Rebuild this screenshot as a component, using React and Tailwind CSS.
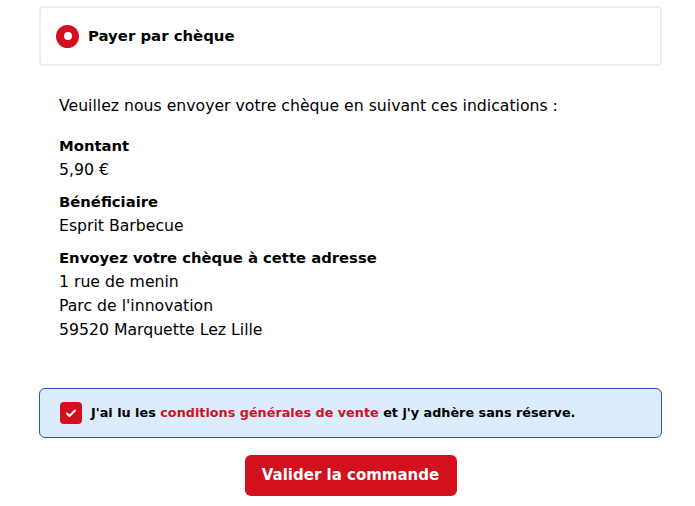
import React from 'react'

const font = { fontFamily: '"DejaVu Sans", "Noto Sans", sans-serif' }

export default function App() {
  return (
    <div className="w-[695px] h-[506px] bg-white text-black pt-[6px] pl-[39px]" style={font}>
      <div className="w-[623px]">
        {/* mode de paiement */}
        <div className="h-[60px] border-2 border-[#ececec] rounded-[4px] flex items-center pl-[15px]">
          <span className="w-[23px] h-[23px] rounded-full bg-[#d2101e] flex items-center justify-center">
            <span className="w-[8px] h-[8px] rounded-full bg-white" />
          </span>
          <span className="ml-[9px] text-[14.9px] font-bold">Payer par chèque</span>
        </div>

        {/* instructions */}
        <div className="pl-[20px] pt-[28px] text-[15.7px] leading-[24px]">
          <p>Veuillez nous envoyer votre chèque en suivant ces indications :</p>
          <p className="mt-[16px] font-bold text-[14.8px]">Montant</p>
          <p>5,90 €</p>
          <p className="mt-[8px] font-bold text-[14.8px]">Bénéficiaire</p>
          <p>Esprit Barbecue</p>
          <p className="mt-[8px] font-bold text-[14.8px]">Envoyez votre chèque à cette adresse</p>
          <p>1 rue de menin</p>
          <p>Parc de l'innovation</p>
          <p>59520 Marquette Lez Lille</p>
        </div>

        {/* CGV */}
        <div className="mt-[46px] h-[50px] border border-[#1f5fa8] bg-[#dbecfd] rounded-[6px] flex items-center pl-[20px]">
          <span className="w-[22px] h-[22px] rounded-[4px] bg-[#d2101e] flex items-center justify-center">
            <svg width="12" height="12" viewBox="0 0 24 24" fill="none" stroke="white" strokeWidth="4" strokeLinecap="round" strokeLinejoin="round">
              <path d="M4 13l5 5L20 7" />
            </svg>
          </span>
          <span className="ml-[9px] text-[12.8px] font-bold">
            J'ai lu les <span className="text-[#d2101e]">conditions générales de vente</span> et j'y adhère sans réserve.
          </span>
        </div>

        <div className="flex justify-center mt-[17px]">
          <button className="w-[212px] h-[41px] bg-[#d2101e] rounded-[6px] text-white font-bold text-[15px]">
            Valider la commande
          </button>
        </div>
      </div>
    </div>
  )
}
